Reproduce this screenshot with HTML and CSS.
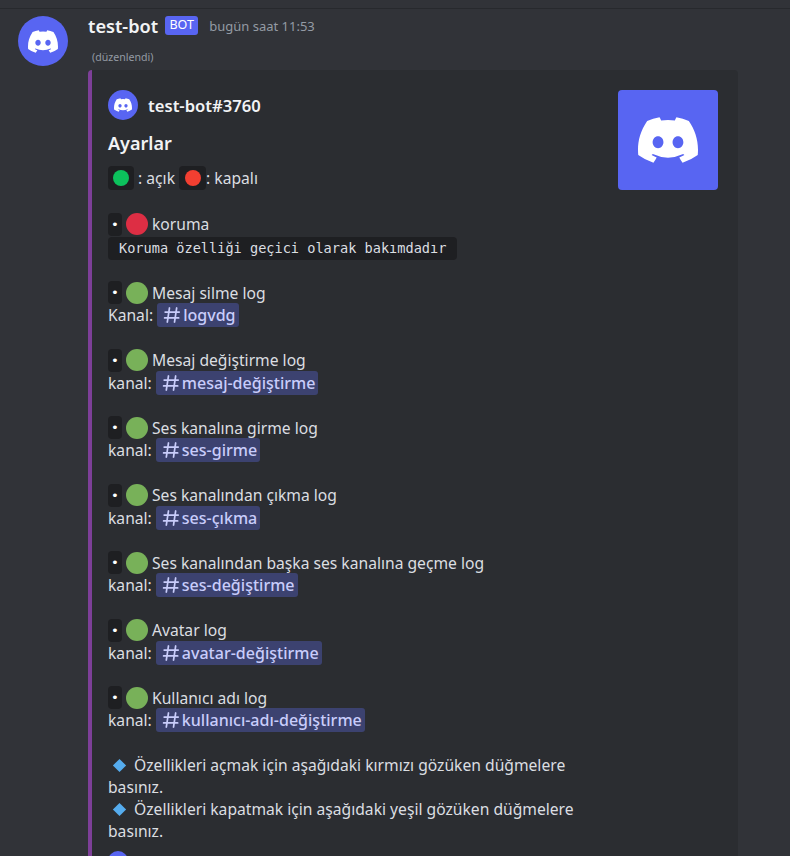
FILE: index.html
```html
<!DOCTYPE html>
<html lang="tr">
<head>
<meta charset="utf-8">
<title>test-bot</title>
<link rel="stylesheet" href="styles.css">
</head>
<body>
<svg class="defs" width="0" height="0" aria-hidden="true">
  <symbol id="clyde" viewBox="0 0 127.14 96.36">
    <path fill="#fff" d="M107.7,8.07A105.15,105.15,0,0,0,81.47,0a72.06,72.06,0,0,0-3.36,6.83A97.68,97.68,0,0,0,49,6.83,72.37,72.37,0,0,0,45.64,0,105.89,105.89,0,0,0,19.39,8.09C2.79,32.65-1.71,56.6.54,80.21h0A105.73,105.73,0,0,0,32.71,96.36,77.7,77.7,0,0,0,39.6,85.25a68.42,68.42,0,0,1-10.85-5.18c.91-.66,1.8-1.34,2.66-2a75.57,75.57,0,0,0,64.32,0c.87.71,1.76,1.39,2.66,2a68.68,68.68,0,0,1-10.87,5.19,77,77,0,0,0,6.89,11.1A105.25,105.25,0,0,0,126.6,80.22h0C129.24,52.84,122.09,29.11,107.7,8.07ZM42.45,65.69C36.18,65.69,31,60,31,53s5-12.74,11.43-12.74S54,46,53.89,53,48.84,65.69,42.45,65.69Zm42.24,0C78.41,65.69,73.25,60,73.25,53s5-12.74,11.44-12.74S96.23,46,96.12,53,91.08,65.69,84.69,65.69Z"/>
  </symbol>
  <symbol id="hash" viewBox="0 0 20 20">
    <path fill="none" stroke="currentColor" stroke-width="1.9" stroke-linecap="round" d="M7.2 2.2 4.8 17.8M15.2 2.2 12.8 17.8M2.4 6.8H18M1.8 13.2H17.4"/>
  </symbol>
</svg>
<main class="chat">
  <article class="message">
    <div class="avatar"><svg class="avatar-logo"><use href="#clyde"/></svg></div>
    <div class="content">
      <header class="msg-head">
        <span class="username">test-bot</span>
        <span class="bot-tag">BOT</span>
        <time class="stamp">bugün saat 11:53</time>
      </header>
      <div class="edited">(düzenlendi)</div>
      <section class="embed">
        <div class="embed-main">
          <div class="author">
            <span class="author-icon"><svg class="author-logo"><use href="#clyde"/></svg></span>
            <span class="author-name">test-bot#3760</span>
          </div>
          <h2 class="title">Ayarlar</h2>
          <div class="desc">
            <p class="legend"><span class="tile"><i class="dot dot-on"></i></span> : açık <span class="tile tile-b"><i class="dot dot-off"></i></span>: kapalı</p>

            <p class="row first"><code class="bullet">•</code><i class="emoji red"></i><span>koruma</span></p>
            <p class="codeline"><code class="code">Koruma özelliği geçici olarak bakımdadır</code></p>

            <p class="row gap"><code class="bullet">•</code><i class="emoji green"></i><span>Mesaj silme log</span></p>
            <p class="row">Kanal:<span class="mention"><svg class="hash"><use href="#hash"/></svg>logvdg</span></p>

            <p class="row gap"><code class="bullet">•</code><i class="emoji green"></i><span>Mesaj değiştirme log</span></p>
            <p class="row">kanal:<span class="mention"><svg class="hash"><use href="#hash"/></svg>mesaj-değiştirme</span></p>

            <p class="row gap"><code class="bullet">•</code><i class="emoji green"></i><span>Ses kanalına girme log</span></p>
            <p class="row">kanal:<span class="mention"><svg class="hash"><use href="#hash"/></svg>ses-girme</span></p>

            <p class="row gap"><code class="bullet">•</code><i class="emoji green"></i><span>Ses kanalından çıkma log</span></p>
            <p class="row">kanal:<span class="mention"><svg class="hash"><use href="#hash"/></svg>ses-çıkma</span></p>

            <p class="row gap"><code class="bullet">•</code><i class="emoji green"></i><span>Ses kanalından başka ses kanalına geçme log</span></p>
            <p class="row">kanal:<span class="mention"><svg class="hash"><use href="#hash"/></svg>ses-değiştirme</span></p>

            <p class="row gap"><code class="bullet">•</code><i class="emoji green"></i><span>Avatar log</span></p>
            <p class="row">kanal:<span class="mention"><svg class="hash"><use href="#hash"/></svg>avatar-değiştirme</span></p>

            <p class="row gap"><code class="bullet">•</code><i class="emoji green"></i><span>Kullanıcı adı log</span></p>
            <p class="row">kanal:<span class="mention"><svg class="hash"><use href="#hash"/></svg>kullanıcı-adı-değiştirme</span></p>

            <p class="note"><i class="diamond"></i>Özellikleri açmak için aşağıdaki kırmızı gözüken düğmelere basınız.</p>
            <p class="note"><i class="diamond"></i>Özellikleri kapatmak için aşağıdaki yeşil gözüken düğmelere basınız.</p>
          </div>
          <div class="footer-icon"></div>
        </div>
        <div class="thumb"><svg class="thumb-logo"><use href="#clyde"/></svg></div>
      </section>
    </div>
  </article>
</main>
</body>
</html>
```

FILE: styles.css
```css
* { box-sizing: border-box; }
html, body { margin: 0; height: 856px; overflow: hidden; }
body {
  background: #313338;
  color: #dbdee1;
  font-family: "Noto Sans", "Open Sans", sans-serif;
  font-size: 15.65px;
}
.defs { position: absolute; }
.chat { margin-top: 8px; border-top: 1px solid #27292d; padding: 7px 0 0 18px; }
.message { display: flex; gap: 20px; }
.avatar {
  width: 50px; height: 50px; flex: none;
  border-radius: 50%;
  background: #5865f2;
  display: flex; align-items: center; justify-content: center;
}
.avatar-logo { width: 30px; height: 23px; }
.content { width: 650px; flex: none; }
.msg-head { display: flex; align-items: center; height: 22px; margin-top: -1px; }
.username { color: #f2f3f5; font-size: 18.2px; font-weight: 600; }
.bot-tag {
  margin-left: 7px; width: 33px; height: 19px;
  background: #5865f2; color: #fff; border-radius: 3px;
  font-size: 12.5px; line-height: 17px; text-align: center;
  position: relative; top: -1px;
}
.stamp { margin-left: 11px; color: #949ba4; font-size: 13px; }
.edited { margin: 12px 0 0 4px; height: 16px; line-height: 16px; color: #949ba4; font-size: 10.6px; }
.embed {
  margin-top: 5px;
  height: 800px;
  display: grid;
  grid-template-columns: 494px 100px;
  column-gap: 16px;
  align-items: start;
  background: #2b2d31;
  border-left: 4px solid #7d3f98;
  border-radius: 4px;
  padding: 20px 0 0 16px;
}
.author { display: flex; align-items: center; gap: 10px; height: 30px; }
.author-icon {
  width: 30px; height: 30px; border-radius: 50%; background: #5865f2;
  display: flex; align-items: center; justify-content: center;
}
.author-logo { width: 18px; height: 14px; }
.author-name { color: #f2f3f5; font-size: 16.6px; font-weight: 600; }
.title { margin: 10px 0 0; height: 26px; line-height: 26px; color: #f2f3f5; font-size: 18px; font-weight: 600; }
.desc p { margin: 0; }
.desc .legend { margin-top: 10px; height: 24px; line-height: 24px; display: block; white-space: pre-wrap; }
.tile {
  display: inline-flex; align-items: center; justify-content: center;
  width: 26px; height: 24px; background: #1e1f22; border-radius: 4px; vertical-align: top;
}
.tile-b { width: 27px; }
.dot { width: 16px; height: 16px; border-radius: 50%; display: block; }
.dot-on { background: #0cc15c; }
.dot-off { background: #f23f31; }
.row { display: flex; align-items: center; height: 22.5px; white-space: nowrap; }
.desc .first { margin-top: 23px; }
.desc .gap { margin-top: 22.5px; }
.bullet {
  width: 14px; height: 23px; background: #1e1f22; border-radius: 4px;
  color: #fff; font-family: "DejaVu Sans Mono", monospace; font-size: 13px;
  display: flex; align-items: center; justify-content: center;
}
.emoji { width: 22px; height: 22px; border-radius: 50%; margin: 0 4px; display: block; }
.red { background: #dd2e44; }
.green { background: #78b159; }
.codeline { height: 23.25px; }
.code {
  display: inline-block; height: 23px; line-height: 23px; padding: 0 11px;
  background: #1e1f22; border-radius: 4px; color: #dbdee1;
  font-family: "DejaVu Sans Mono", monospace; font-size: 13.6px; white-space: pre;
}
.mention {
  display: inline-flex; align-items: center; height: 24px; margin-left: 4px; padding: 0 3px 0 6px;
  background: #3c4270; border-radius: 3px; color: #c9cdfb; font-weight: 500; font-size: 16.05px;
}
.hash { width: 18px; height: 18px; margin-right: 2px; color: #c9cdfb; }
.note { line-height: 22px; }
.desc .row + .note { margin-top: 22.5px; }
.diamond {
  display: inline-block; width: 11px; height: 11px; margin: 0 9px 0 6px;
  background: #55acee; transform: rotate(45deg) scale(.85);
}
.footer-icon { width: 20px; height: 20px; margin-top: 9px; border-radius: 50%; background: #5865f2; }
.thumb {
  width: 100px; height: 100px; background: #5865f2; border-radius: 4px;
  display: flex; align-items: center; justify-content: center;
}
.thumb-logo { width: 60px; height: 46px; }
```
